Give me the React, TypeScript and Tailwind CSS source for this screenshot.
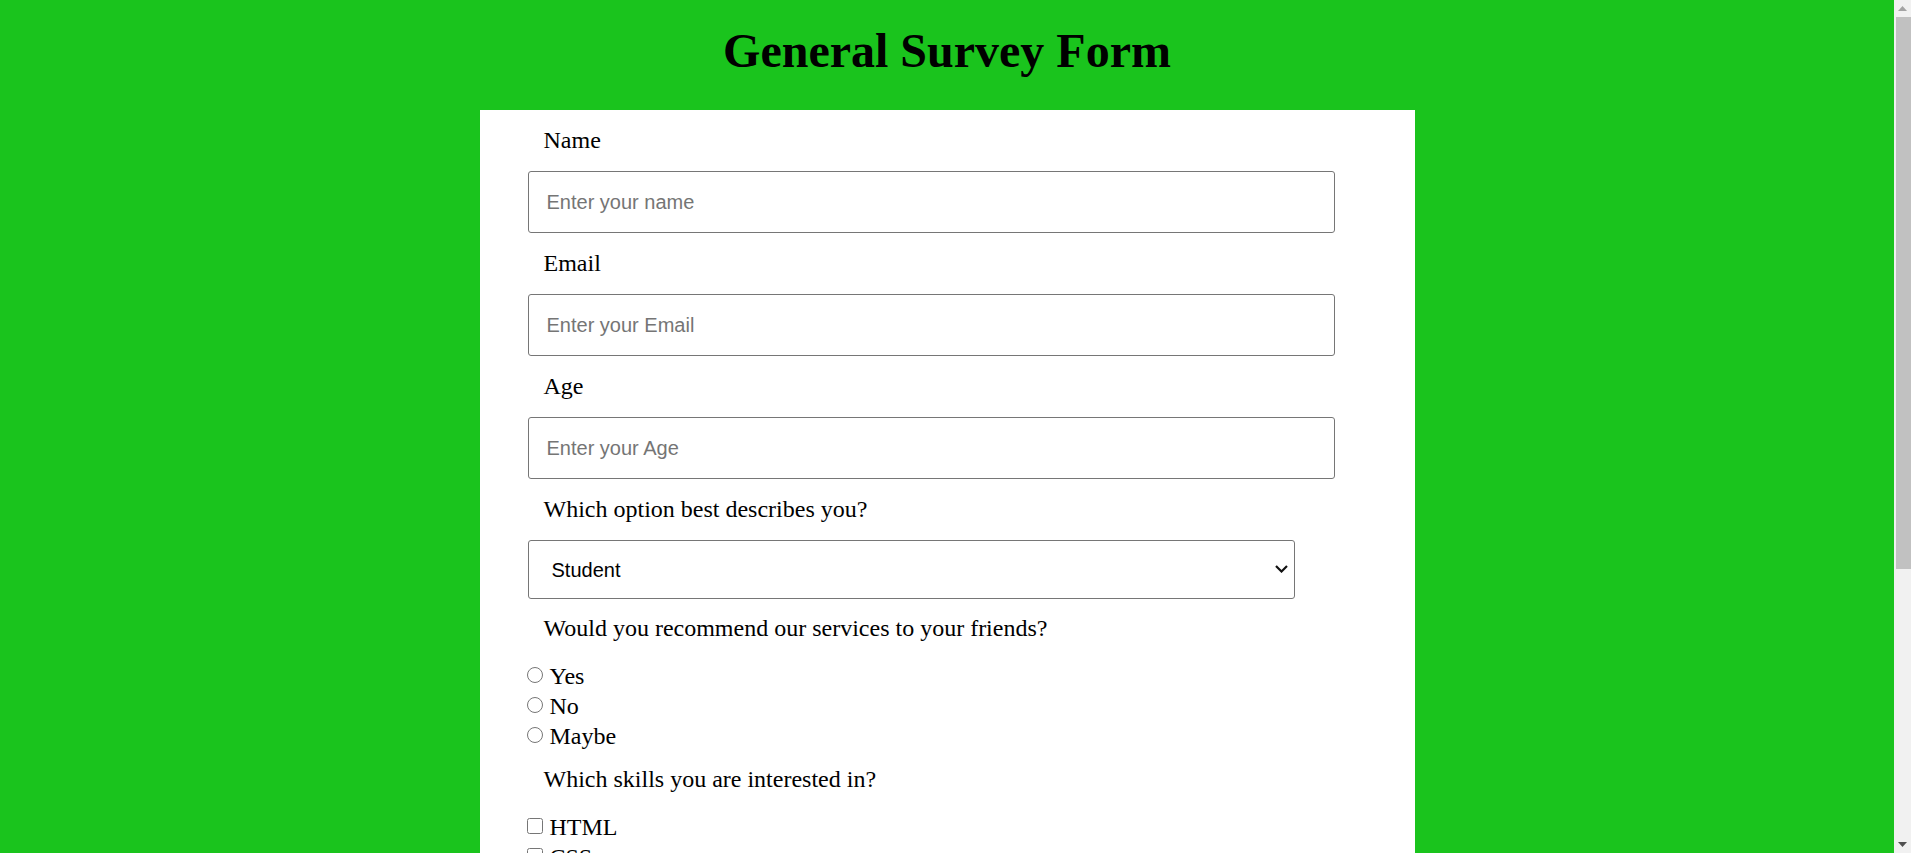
import React from "react";

const serif = "font-['Liberation_Serif','Times_New_Roman',serif]";
const sans = "font-['Liberation_Sans',Arial,sans-serif]";

const textFields = [
  { id: "name", label: "Name", type: "text", placeholder: "Enter your name" },
  { id: "email", label: "Email", type: "email", placeholder: "Enter your Email" },
  { id: "age", label: "Age", type: "number", placeholder: "Enter your Age" },
];

const recommend = ["Yes", "No", "Maybe"];
const skills = ["HTML", "CSS", "JavaScript", "React", "Python"];

function Label({ htmlFor, children }: { htmlFor?: string; children: React.ReactNode }) {
  return (
    <label htmlFor={htmlFor} className="ml-[16px] block text-[24px] leading-[28px]">
      {children}
    </label>
  );
}

// windows-style scrollbar, the screenshot was taken with one showing
function Scrollbar() {
  return (
    <div className="fixed top-0 right-0 flex h-screen w-[17px] flex-col bg-[#f1f1f1]">
      <div className="flex h-[17px] items-center justify-center">
        <svg width="9" height="5" viewBox="0 0 9 5">
          <path d="M4.5 0 L9 5 L0 5 Z" fill="#a3a3a3" />
        </svg>
      </div>
      <div className="ml-[2px] h-[552px] bg-[#c1c1c1]" />
      <div className="flex-1" />
      <div className="flex h-[17px] items-center justify-center">
        <svg width="9" height="5" viewBox="0 0 9 5">
          <path d="M0 0 L9 0 L4.5 5 Z" fill="#505050" />
        </svg>
      </div>
    </div>
  );
}

export default function App() {
  return (
    <main className={`min-h-screen bg-[#1ac41d] pt-[24px] pr-[17px] pb-[40px] text-black ${serif}`}>
      <h1 className="text-center text-[48px] leading-[53px] font-bold">General Survey Form</h1>
      <form className="mx-auto mt-[33px] w-[935px] bg-white pt-[16px] pb-[40px] pl-[48px]">
        {textFields.map((f) => (
          <div key={f.id} className="pb-[16px]">
            <Label htmlFor={f.id}>{f.label}</Label>
            <input
              id={f.id}
              type={f.type}
              placeholder={f.placeholder}
              className={`mt-[17px] block h-[62px] w-[807px] rounded-[3px] border border-[#767676] px-[18px] text-[20px] placeholder:text-[#757575] ${sans}`}
            />
          </div>
        ))}

        <Label htmlFor="role">Which option best describes you?</Label>
        <div className="relative mt-[17px] w-[767px]">
          <select
            id="role"
            defaultValue="student"
            className={`block h-[59px] w-full appearance-none rounded-[3px] border border-[#767676] pr-[30px] pl-[23px] text-[20px] ${sans}`}
          >
            <option value="student">Student</option>
            <option value="job">Full Time Job</option>
            <option value="learner">Full Time Learner</option>
            <option value="other">Prefer not to say</option>
          </select>
          <svg
            className="pointer-events-none absolute top-[25px] right-[7px]"
            width="13"
            height="8"
            viewBox="0 0 13 8"
          >
            <path d="M1 1 L6.5 6.5 L12 1" fill="none" stroke="#111" strokeWidth="2.2" />
          </svg>
        </div>

        <div className="mt-[15px]">
          <Label>Would you recommend our services to your friends?</Label>
        </div>
        <div className="mt-[20px] ml-[-1px]">
          {recommend.map((r) => (
            <label key={r} className="flex h-[30px] items-start gap-[7px] text-[24px] leading-[28px]">
              <input type="radio" name="recommend" value={r} className="mt-[5px] h-[16px] w-[16px]" />
              {r}
            </label>
          ))}
        </div>

        <div className="mt-[13px]">
          <Label>Which skills you are interested in?</Label>
        </div>
        <div className="mt-[20px] ml-[-1px]">
          {skills.map((s) => (
            <label key={s} className="flex h-[30px] items-start gap-[7px] text-[24px] leading-[28px]">
              <input type="checkbox" value={s} className="mt-[5px] h-[16px] w-[16px]" />
              {s}
            </label>
          ))}
        </div>

        <div className="mt-[20px]">
          <Label htmlFor="comments">Any comments or suggestions?</Label>
        </div>
        <textarea
          id="comments"
          placeholder="Enter your comment here..."
          className={`mt-[17px] block h-[140px] w-[807px] rounded-[3px] border border-[#767676] px-[18px] py-[12px] text-[20px] placeholder:text-[#757575] ${sans}`}
        />
        <button
          type="submit"
          className={`mt-[24px] block h-[56px] w-[807px] rounded-[3px] bg-[#1ac41d] text-[22px] text-white ${sans}`}
        >
          Submit
        </button>
      </form>
      <Scrollbar />
    </main>
  );
}
